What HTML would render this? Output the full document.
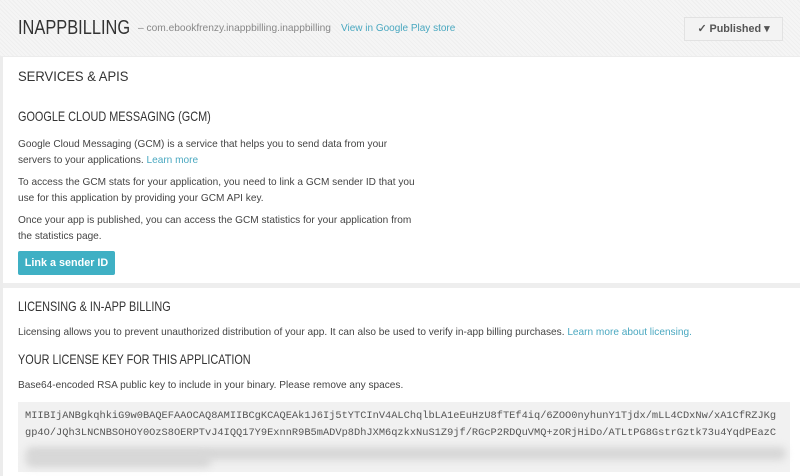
<!DOCTYPE html>
<html><head><meta charset="utf-8"><style>
*{margin:0;padding:0;box-sizing:border-box}
body{width:800px;height:476px;overflow:hidden;background:#ececec;font-family:"Liberation Sans",sans-serif;color:#333;position:relative}
.hdr{position:absolute;left:0;top:0;width:800px;height:56px;background:repeating-linear-gradient(45deg,#efefef 0 1px,#f5f5f5 1px 3px)}
.panel{position:absolute;left:3px;top:57px;width:797px;height:419px;background:#fff}
.sep{position:absolute;left:3px;top:283px;width:797px;height:5px;background:#eeeeee}
.a{position:absolute;white-space:nowrap;transform-origin:0 0}
.t{font-size:10.1px;color:#444}
.h{font-size:13.6px;color:#333;transform:scaleX(0.8)}
.lnk{color:#4aa8c0}
.btn{position:absolute;left:18px;top:251px;width:97px;height:24px;background:#3fb0c4;color:#fff;font-weight:bold;font-size:10.8px;border-radius:2px;text-align:center;line-height:24px}
.pub{position:absolute;left:684px;top:17px;width:99px;height:24px;background:#f3f3f3;border:1px solid #e2e2e2;font-size:10.8px;font-weight:bold;color:#555;line-height:22px;text-align:center}
.key{position:absolute;left:18px;top:402px;width:772px;height:70px;background:#f1f1f1}
.mono{font-family:"Liberation Mono",monospace;font-size:10.35px;color:#555}
.blur{position:absolute;background:#d6d6d6;filter:blur(4px);border-radius:6px}
</style></head><body>
<div class="hdr"></div>
<div class="a" style="left:18px;top:17px;font-size:20px;color:#333;transform:scaleX(0.82)">INAPPBILLING</div>
<div class="a" style="left:138px;top:23px;font-size:10.2px;color:#888">– com.ebookfrenzy.inappbilling.inappbilling</div>
<div class="a lnk" style="left:341px;top:23px;font-size:10px">View in Google Play store</div>
<div class="pub">✓ Published ▾</div>
<div class="panel"></div>
<div class="sep"></div>
<div class="a" style="left:18px;top:68px;font-size:14px;color:#333;transform:scaleX(0.93)">SERVICES &amp; APIS</div>
<div class="a h" style="left:18px;top:109px">GOOGLE CLOUD MESSAGING (GCM)</div>
<div class="a t" style="left:18px;top:137px;line-height:16px">Google Cloud Messaging (GCM) is a service that helps you to send data from your<br>servers to your applications. <span class="lnk">Learn more</span></div>
<div class="a t" style="left:18px;top:175px;line-height:16px">To access the GCM stats for your application, you need to link a GCM sender ID that you<br>use for this application by providing your GCM API key.</div>
<div class="a t" style="left:18px;top:213px;line-height:16px">Once your app is published, you can access the GCM statistics for your application from<br>the statistics page.</div>
<div class="btn">Link a sender ID</div>
<div class="a h" style="left:18px;top:299px">LICENSING &amp; IN-APP BILLING</div>
<div class="a t" style="left:18px;top:327px">Licensing allows you to prevent unauthorized distribution of your app. It can also be used to verify in-app billing purchases. <span class="lnk">Learn more about licensing.</span></div>
<div class="a h" style="left:18px;top:352px">YOUR LICENSE KEY FOR THIS APPLICATION</div>
<div class="a t" style="left:18px;top:380px">Base64-encoded RSA public key to include in your binary. Please remove any spaces.</div>
<div class="key"></div>
<div class="a mono" style="left:25px;top:410px">MIIBIjANBgkqhkiG9w0BAQEFAAOCAQ8AMIIBCgKCAQEAk1J6Ij5tYTCInV4ALChqlbLA1eEuHzU8fTEf4iq/6ZOO0nyhunY1Tjdx/mLL4CDxNw/xA1CfRZJKg</div>
<div class="a mono" style="left:25px;top:427px">gp4O/JQh3LNCNBSOHOY0OzS8OERPTvJ4IQQ17Y9ExnnR9B5mADVp8DhJXM6qzkxNuS1Z9jf/RGcP2RDQuVMQ+zORjHiDo/ATLtPG8GstrGztk73u4YqdPEazC</div>
<div class="blur" style="left:26px;top:447px;width:760px;height:13px"></div>
<div class="blur" style="left:26px;top:455px;width:185px;height:12px"></div>
</body></html>
